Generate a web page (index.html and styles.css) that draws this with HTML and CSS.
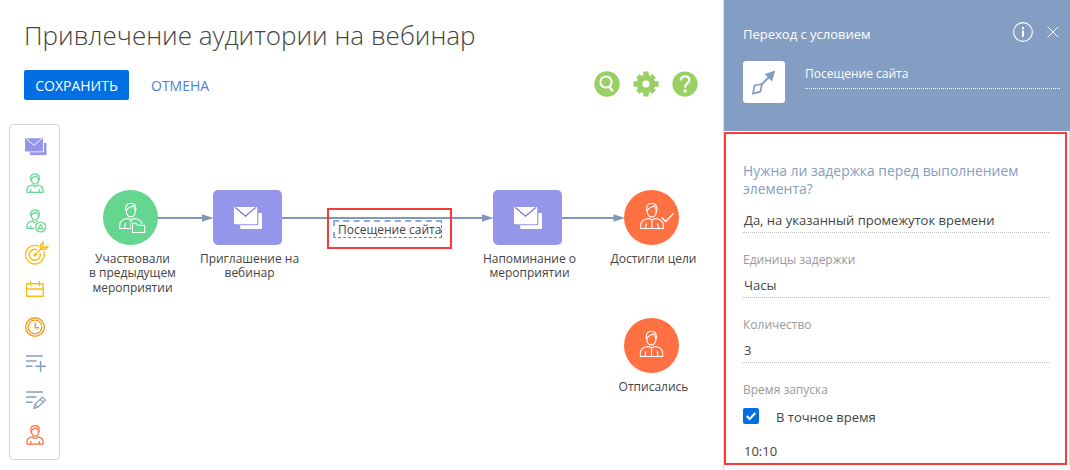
FILE: index.html
```html
<!DOCTYPE html>
<html lang="ru">
<head>
<meta charset="utf-8">
<title>Привлечение аудитории на вебинар</title>
<link rel="stylesheet" href="styles.css">
</head>
<body>
<svg class="defs" width="0" height="0">
  <symbol id="mail" viewBox="0 0 28 22">
    <path d="M1.5 0H22a1.2 1.2 0 0 1 1.2 1.2V16a1.2 1.2 0 0 1-1.2 1.2H1.2A1.2 1.2 0 0 1 0 16V1.2A1.2 1.2 0 0 1 1.5 0Z" fill="currentColor"/>
    <path d="M1.3.5 11.5 9.2 21.8.5" fill="none" stroke="var(--fold)" stroke-width="1.2"/>
    <path d="M24.400 6H27a1 1 0 0 1 1 1v14a1 1 0 0 1-1 1H7.200a1 1 0 0 1-1-1v-2.700H23.400a1 1 0 0 0 1-1Z" fill="currentColor"/>
  </symbol>
  <symbol id="person" viewBox="0 0 24 27">
    <g fill="none" stroke="currentColor" stroke-width="1.1">
      <path d="M7.400 9.500C5.500 4.500 7.500.8 11.800.8s6.300 3.700 4.400 8.700"/>
      <path d="M7.300 8.500C7.500 5.500 12 4.800 14.200 3.300c.3 1.400 2 2.200 2.100 5.200"/>
      <path d="M7.300 8.500c0 3.500 2 6 4.500 6s4.500-2.500 4.500-6"/>
      <path d="M8.500 16C3.500 16.600.7 19.500.7 23v3h22.600v-3c0-3.500-2.800-6.400-7.800-7L12 17.300Z"/>
      <path d="M12 17.500V26M5.800 26v-2.500c0-1 .3-1.800 1-2.500M18.200 26v-2.500c0-1-.3-1.800-1-2.500"/>
    </g>
  </symbol>
  <symbol id="contact" viewBox="0 0 18 21">
    <g fill="none" stroke="currentColor" stroke-width="1.3">
      <path d="M5.200 7.800C3.500 3.500 5.300.8 9 .8s5.500 2.700 3.800 7"/>
      <path d="M5.300 6.200c.5-2 3.200-2.200 5-3 .6 1 2 1.500 2.400 3M5.300 6.200c-.2 3 1.500 5.300 3.700 5.300s3.900-2.300 3.700-5.300"/>
      <path d="M6.200 12.300C2.500 12.800.8 15 .8 17.700v2.200h16.400v-2.200c0-2.700-1.700-4.900-5.400-5.400-.6 1-1.500 1.500-2.800 1.500s-2.200-.5-2.800-1.500Z"/>
      <path d="M4.600 19.800v-3.200M13.400 19.800v-3.200"/>
    </g>
  </symbol>
</svg>
<div class="app">
  <main class="main">
    <h1 class="title">Привлечение аудитории на вебинар</h1>
    <div class="toolbar">
      <button class="btn btn-primary">СОХРАНИТЬ</button>
      <button class="btn btn-link">ОТМЕНА</button>
      <div class="tools">
        <svg width="26" height="26" viewBox="0 0 26 26"><circle cx="13" cy="13" r="12.700" fill="#99d063"/><circle cx="12" cy="11" r="5.600" fill="none" stroke="#fff" stroke-width="2"/><path d="m15.200 15.500 3.600 4.800" stroke="#fff" stroke-width="2.400"/></svg>
        <svg width="26" height="26" viewBox="0 0 26 26"><g fill="#99d063"><circle cx="13" cy="13" r="9.300"/><path d="M10.300.5h5.400v25h-5.400zM.5 10.300h25v5.400H.5z"/><path d="M10.500 1.500h5v23h-5zM1.500 10.500h23v5h-23z" transform="rotate(45 13 13)"/></g><circle cx="13" cy="13" r="3.600" fill="#fff"/></svg>
        <svg width="26" height="26" viewBox="0 0 26 26"><circle cx="13" cy="13" r="12.600" fill="#99d063"/><path d="M8.800 9.500c0-2.600 1.700-4.200 4.200-4.200s4.300 1.500 4.300 3.700c0 3-4.200 3.500-4.200 7.500" fill="none" stroke="#fff" stroke-width="2.300"/><circle cx="13.100" cy="19.900" r="1.700" fill="#fff"/></svg>
      </div>
    </div>
    <div class="workspace">
      <aside class="palette">
        <svg class="violet" viewBox="10 129 49 36"><use href="#mail" x="25" y="138" width="21.700" height="17.400"/></svg>
        <svg class="green" viewBox="10 165 49 36"><use href="#contact" x="26" y="173" width="18" height="20.500"/></svg>
        <svg class="green" viewBox="10 201 49 36"><use href="#contact" x="26" y="209" width="18" height="20.500"/><circle cx="40.700" cy="227" r="6.500" fill="#fff"/><circle cx="40.700" cy="227" r="5" fill="#fff" stroke="currentColor" stroke-width="1.200"/><path d="m40.700 224.700 2.500 4h-5Z" fill="none" stroke="currentColor" stroke-width="1.200"/></svg>
        <svg class="yellow" viewBox="10 237 49 36"><g fill="none" stroke="currentColor" stroke-width="1.400"><path d="M39.500 246.600a9.300 9.300 0 1 0 4 4.500M37.500 250a5.500 5.500 0 1 0 2.500 3"/><path d="m35 255 8-8M40.800 249.200v-4.700l2.200-2.200v4.700h4.700l-2.200 2.200h-4.700" /></g><circle cx="35" cy="255" r="1.700" fill="currentColor"/></svg>
        <svg class="yellow" viewBox="10 273 49 36"><path d="M26.700 283.700h16.500v12.600H26.700zM26.700 289h16.500M30.600 281v5M39.400 281v5" fill="none" stroke="currentColor" stroke-width="1.400"/></svg>
        <svg class="amber" viewBox="10 309 49 36"><g fill="none" stroke="currentColor"><circle cx="35" cy="327" r="9.300" stroke-width="1.400"/><circle cx="35" cy="327" r="6.800" stroke-width="1.200"/><path d="M35.300 322.500v5.200h3.700" stroke-width="1.500"/></g></svg>
        <svg class="blue" viewBox="10 345 49 36"><path d="M26 356h17M26 361h10.500M26 366.300h6.500M35.300 366.300h10.700M40.600 361v10.700" fill="none" stroke="currentColor" stroke-width="1.500"/></svg>
        <svg class="blue" viewBox="10 381 49 36"><path d="M26 392h17M26 397h10.500M26 402.300h6.500" fill="none" stroke="currentColor" stroke-width="1.500"/><path d="m34 408.300 1-4 7.500-7.300 2.900 2.900-7.500 7.300Zm6.200-9 2.900 2.900M35 404.300l2.900 2.900" fill="none" stroke="currentColor" stroke-width="1.200"/></svg>
        <svg class="orange" viewBox="10 417 49 36"><use href="#contact" x="26" y="424.800" width="18" height="20.500"/></svg>
      </aside>
      <section class="canvas">
        <svg class="links" width="640" height="60" viewBox="70 190 640 60"><g stroke="#8197ba" stroke-width="2"><path d="M157 218h48M281 218h204M561 218h54"/></g><g fill="#8197ba"><path d="m202 214.300 11.500 3.700-11.500 3.700zM482 214.300l11.500 3.700-11.500 3.700zM613.500 214.300l11.500 3.700-11.500 3.700z"/></g></svg>
        <div class="node n1"><div class="shape round green-bg"><svg width="55" height="55" viewBox="103 190 55 55"><use href="#person" x="119" y="202.500" width="24" height="27"/><path d="M132.500 223.500h4l1.200 1.800h7v7.200h-12.200Z" fill="#65d68f" stroke="#65d68f" stroke-width="3"/><path d="M132.500 232.500v-9.200h4l1.200 2h7v7.200Z" fill="none" stroke="#fff" stroke-width="1.100"/></svg></div><div class="label">Участвовали<br>в предыдущем<br>мероприятии</div></div>
        <div class="node n2"><div class="shape box"><svg width="28" height="22"><use href="#mail" width="28" height="22"/></svg></div><div class="label">Приглашение на<br>вебинар</div></div>
        <div class="node n3"><div class="shape box"><svg width="28" height="22"><use href="#mail" width="28" height="22"/></svg></div><div class="label">Напоминание о<br>мероприятии</div></div>
        <div class="node n4"><div class="shape round orange-bg"><svg width="55" height="55" viewBox="624 190 55 55"><use href="#person" x="640" y="202.500" width="24" height="27"/><path d="m661.500 217.500 4.300 4 7.500-8" fill="none" stroke="#fff" stroke-width="1.300"/></svg></div><div class="label">Достигли цели</div></div>
        <div class="node n5"><div class="shape round orange-bg"><svg width="55" height="55" viewBox="624 318 55 55"><use href="#person" x="639.500" y="330.500" width="24" height="27"/></svg></div><div class="label">Отписались</div></div>
        <div class="highlight"><div class="flow-name">Посещение сайта</div></div>
      </section>
    </div>
  </main>
  <aside class="panel">
    <header class="panel-head">
      <div class="head-row"><span class="head-title">Переход с условием</span>
        <svg width="50" height="20" viewBox="1013 22 50 20"><g fill="none" stroke="#fff"><circle cx="1023" cy="32" r="9.400" stroke-width="1.100"/><path d="m1047.500 26.500 11 11m0-11-11 11"/><path d="M1023 30.500v6.500M1023 27v2.200" stroke-width="2"/></g></svg>
      </div>
      <div class="head-body">
        <div class="type-icon"><svg width="42" height="42" viewBox="743 61 42 42"><path d="m761 85 8-8" stroke="#849dc2" stroke-width="2"/><path d="m775.300 70.500-3.300 10.900-7.400-7.400Z" fill="#849dc2"/><path d="m753 93.500 1.500-8 7.500-1.500-1.700 7.700Z" fill="none" stroke="#849dc2" stroke-width="1.700"/></svg></div>
        <div class="element-name">Посещение сайта</div>
      </div>
    </header>
    <div class="panel-body">
      <h2 class="question">Нужна ли задержка перед выполнением элемента?</h2>
      <div class="value answer">Да, на указанный промежуток времени</div>
      <div class="field"><div class="caption units">Единицы задержки</div><div class="value">Часы</div></div>
      <div class="field"><div class="caption">Количество</div><div class="value">3</div></div>
      <div class="caption start">Время запуска</div>
      <div class="check-row"><span class="checkbox"><svg width="16" height="16"><path d="m3.700 8 3 3 5.600-6" fill="none" stroke="#fff" stroke-width="2"/></svg></span><span class="check-label">В точное время</span></div>
      <div class="time">10:10</div>
    </div>
  </aside>
</div>
</body>
</html>
```
FILE: styles.css
```css
* { box-sizing: border-box; }
body { margin: 0; background: #fff; color: #444; font-family: "Open Sans", "Noto Sans", sans-serif; font-size: 13px; overflow: hidden; }
svg { display: block; flex: none; }
.defs { position: absolute; }
.app { display: flex; width: 1070px; height: 470px; }
.main { width: 724px; flex: none; border-right: 1px solid #dedede; }
.title { margin: 0; padding: 17px 0 0 24px; font-size: 26px; line-height: 36px; font-weight: 300; white-space: nowrap; color: #444; }
.toolbar { display: flex; align-items: center; height: 30px; margin-top: 17px; padding: 0 25px 0 24px; }
.btn { height: 30px; padding: 2px 0 0; border: 0; background: none; font: 14px/28px "Open Sans", sans-serif; white-space: nowrap; }
.btn-primary { width: 105px; border-radius: 2px; background: #006fe3; color: #fff; }
.btn-link { margin-left: 22px; color: #4e7fd0; }
.tools { display: flex; gap: 13px; margin: 0 0 2px auto; }
.workspace { display: flex; margin-top: 24px; }
.palette { display: flex; flex-direction: column; flex: none; width: 51px; height: 336px; margin-left: 9px; padding-top: 4px; border: 1px solid #d6d6d6; border-radius: 4px; }
.palette svg { width: 49px; height: 36px; }
.violet { color: #9595ea; --fold: #fff; }
.green { color: #65d68f; }
.yellow { color: #f5bf19; }
.amber { color: #f59b1c; }
.blue { color: #849dc2; }
.orange { color: #ff7043; }
.canvas { position: relative; flex: 1; height: 346px; }
.links { position: absolute; left: 10px; top: 66px; }
.node { position: absolute; top: 66px; display: flex; flex-direction: column; align-items: center; width: 120px; }
.n1 { left: 10.500px; }
.n2 { left: 127.500px; }
.n3 { left: 407.500px; }
.n4 { left: 531.500px; }
.n5 { left: 531.500px; top: 194px; }
.shape { display: flex; align-items: center; justify-content: center; height: 55px; color: #fff; }
.round { width: 55px; border-radius: 50%; }
.box { width: 69px; border-radius: 5px; background: #9595ea; --fold: #7777d8; }
.green-bg { background: #65d68f; }
.orange-bg { background: #ff7043; }
.label { margin-top: 7px; padding-left: 4px; font-size: 12px; line-height: 14.400px; text-align: center; white-space: nowrap; }
.highlight { position: absolute; left: 267px; top: 84px; width: 125px; height: 41px; padding: 10px 4px; border: 2px solid #f93a3a; }
.flow-name { width: 109px; height: 18px; padding-left: 3px; border: 1px dashed #4f82da; border-top: 2px dashed #8cabea; border-left: 2px dashed #8cabea; font-size: 12px; line-height: 16px; white-space: nowrap; }
.panel { width: 346px; flex: none; }
.panel-head { height: 131px; padding: 22px 7px 0 19px; background: #849dc2; color: #fff; }
.head-row { display: flex; justify-content: space-between; height: 20px; line-height: 25px; }
.head-body { display: flex; gap: 20px; margin-top: 19px; }
.type-icon { width: 42px; height: 42px; border-radius: 3px; background: #fff; }
.element-name { width: 255px; height: 28px; font-size: 12px; line-height: 25px; border-bottom: 1px dotted #fff; }
.panel-body { width: 343px; height: 333px; margin-top: 1px; padding: 28px 16px 0 17px; border: 2px solid #f93a3a; box-shadow: 2px 0 0 #fff, 3px 0 0 #ddd; }
.question { margin: 0; font-size: 13.900px; line-height: 18px; font-weight: 400; color: #849dc2; }
.value { height: 25px; padding-left: 1px; line-height: 24px; border-bottom: 1px dotted #bbb; }
.answer { margin-top: 10px; }
.field { margin-top: 17px; }
.caption { height: 23px; font-size: 12px; line-height: 20px; color: #999; }
.start { margin-top: 17px; }
.check-row { display: flex; align-items: center; gap: 17px; height: 16px; margin-top: 5px; }
.checkbox { width: 16px; height: 16px; border-radius: 2px; background: #006fe3; }
.check-label { line-height: 18px; padding-top: 2px; }
.time { margin-top: 17px; padding-left: 1px; line-height: 20px; }
```
